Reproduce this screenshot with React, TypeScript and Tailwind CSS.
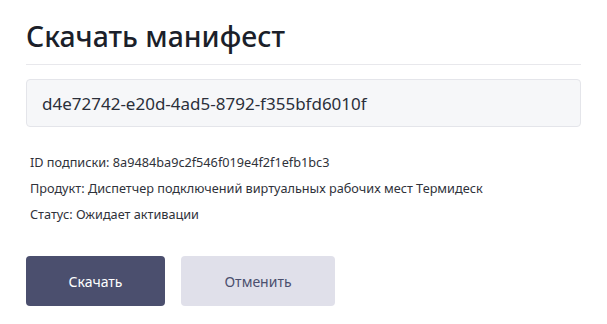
export default function App() {
  const info = [
    { label: 'ID подписки:', value: '8a9484ba9c2f546f019e4f2f1efb1bc3' },
    { label: 'Продукт:', value: 'Диспетчер подключений виртуальных рабочих мест Термидеск' },
    { label: 'Статус:', value: 'Ожидает активации' },
  ];

  return (
    <div className="min-h-screen bg-white px-[26px] pt-[18px] font-['Noto_Sans',sans-serif]">
      {/* Header */}
      <h1 className="border-b border-[#e8e8ec] pb-[10px] text-[28.4px] font-medium leading-[36px] text-[#1b1f2a]">
        Скачать манифест
      </h1>

      {/* Manifest id */}
      <input
        readOnly
        value="d4e72742-e20d-4ad5-8792-f355bfd6010f"
        className="mt-[14px] h-[48px] w-full rounded-[4px] border border-[#e4e5ea] bg-[#f6f7f9] px-[15px] text-[17px] text-[#2b2f3a] focus:outline-none"
      />

      {/* Details */}
      <div className="mt-[22px] px-[4px]">
        {info.map((row) => (
          <p key={row.label} className="text-[12.7px] leading-[26px] text-[#2f323a]">
            {row.label} {row.value}
          </p>
        ))}
      </div>

      {/* Actions */}
      <div className="mt-[29px] flex gap-4">
        <button className="h-[50px] w-[139px] rounded-[4px] bg-[#4b4f6e] text-[14px] text-white">
          Скачать
        </button>
        <button className="h-[50px] w-[154px] rounded-[4px] bg-[#e0e0ea] text-[14px] text-[#4b4f6e]">
          Отменить
        </button>
      </div>
    </div>
  );
}
